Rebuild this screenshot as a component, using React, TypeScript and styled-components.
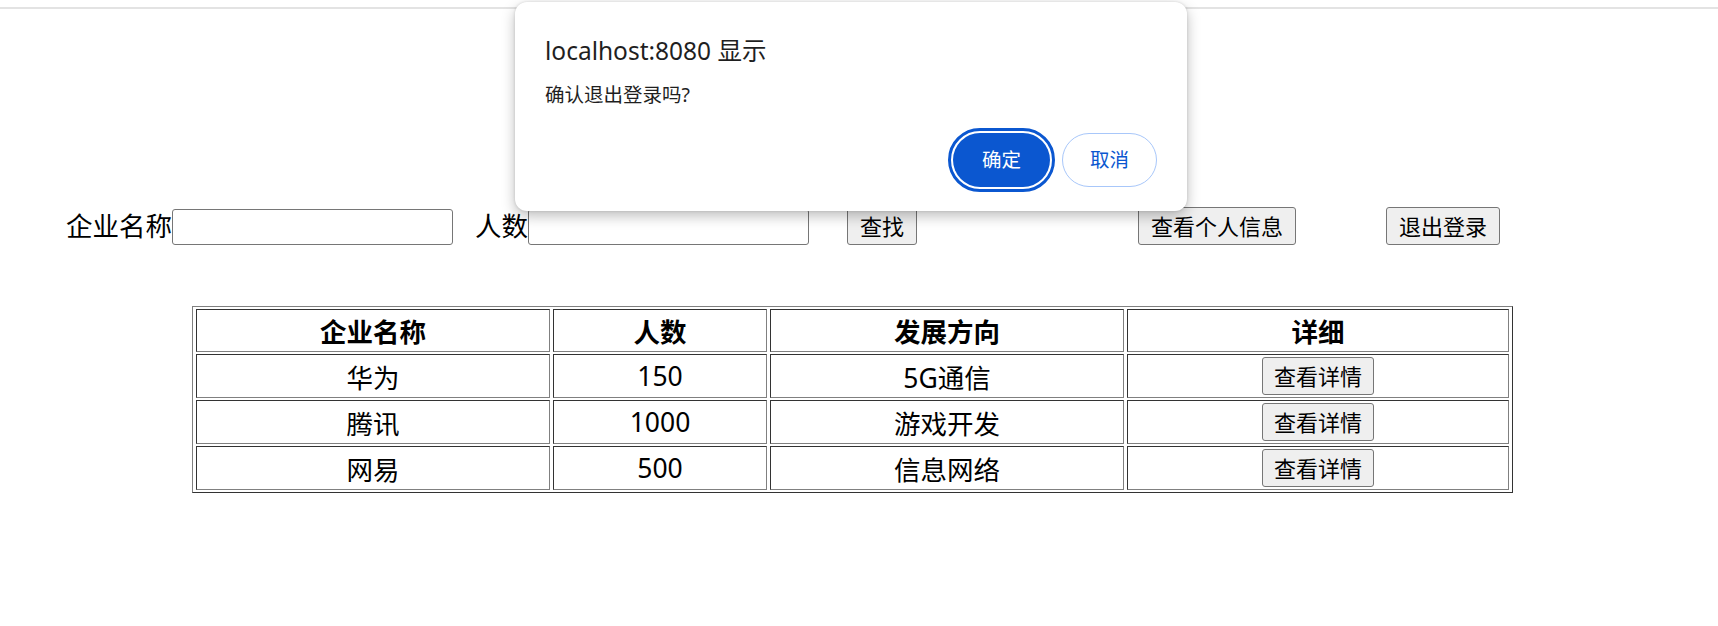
import React from 'react';
import styled, { createGlobalStyle } from 'styled-components';

const GlobalStyle = createGlobalStyle`
  html, body { margin: 0; padding: 0; background: #fff; }
  body {
    font-family: "Noto Sans", "Noto Sans CJK SC", sans-serif;
    color: #000;
  }
`;

const Page = styled.div`
  position: relative;
  width: 1718px;
  height: 626px;
  overflow: hidden;
`;

const TopRule = styled.div`
  margin-top: 7px;
  height: 2px;
  background: #e3e3e3;
`;

const SearchRow = styled.div`
  display: flex;
  align-items: flex-end;
  margin-top: 198px;
  padding-left: 66px;
  height: 38px;
`;

const Label = styled.span<{ $ml?: number }>`
  margin-left: ${(p) => p.$ml ?? 0}px;
  font-size: 26.5px;
  line-height: 38px;
  white-space: nowrap;
`;

const TextInput = styled.input`
  box-sizing: border-box;
  width: 281px;
  height: 36px;
  margin: 0;
  padding: 1px 3px;
  border: 1px solid #767676;
  border-radius: 3px;
  background: #fff;
  font-size: 20px;
`;

const PlainButton = styled.button<{ $ml?: number; $wide?: boolean }>`
  box-sizing: border-box;
  margin: 0 0 0 ${(p) => p.$ml ?? 0}px;
  height: 38px;
  padding: 0 ${(p) => (p.$wide ? 12 : 11)}px;
  border: 1px solid #767676;
  border-radius: 3px;
  background: #efefef;
  color: #000;
  font-family: "Noto Sans", "Noto Sans CJK SC", sans-serif;
  font-size: 22px;
  line-height: 1;
  white-space: nowrap;
`;

const DataTable = styled.table`
  margin: 61px 0 0 192px;
  border-collapse: separate;
  border-spacing: 3px 2.5px;
  table-layout: fixed;
  width: 1321px;
  border: 1px solid;
  border-color: #808080 #333 #333 #808080;
`;

const HeadCell = styled.th<{ $w: number }>`
  box-sizing: border-box;
  width: ${(p) => p.$w}px;
  height: 40px;
  padding: 1px;
  border: 1px solid;
  border-color: #333 #808080 #808080 #333;
  font-size: 26.5px;
  font-weight: 700;
  text-align: center;
  vertical-align: middle;
`;

const BodyCell = styled.td`
  box-sizing: border-box;
  height: 44px;
  padding: 1px;
  border: 1px solid;
  border-color: #333 #808080 #808080 #333;
  font-size: 26.5px;
  text-align: center;
  vertical-align: middle;
`;

const Dialog = styled.div`
  position: absolute;
  top: 2px;
  left: 515px;
  width: 672px;
  height: 209px;
  box-sizing: border-box;
  padding: 34px 30px 24px;
  background: #fff;
  border-radius: 12px;
  box-shadow: 0 5px 14px rgba(0, 0, 0, 0.26), 0 0 3px rgba(0, 0, 0, 0.14);
  display: flex;
  flex-direction: column;
`;

const DialogTitle = styled.div`
  font-size: 24.5px;
  line-height: 30px;
  color: #1f1f1f;
`;

const DialogMessage = styled.div`
  margin-top: 16px;
  font-size: 19.5px;
  line-height: 26px;
  color: #1f1f1f;
`;

const DialogActions = styled.div`
  margin-top: auto;
  display: flex;
  justify-content: flex-end;
  gap: 12px;
`;

const PillButton = styled.button<{ $primary?: boolean }>`
  box-sizing: border-box;
  width: ${(p) => (p.$primary ? 97 : 95)}px;
  height: 54px;
  margin: 0;
  padding: 0;
  border-radius: 27px;
  font-family: "Noto Sans", "Noto Sans CJK SC", sans-serif;
  font-size: 19.5px;
  line-height: 1;
  border: ${(p) => (p.$primary ? 'none' : '1px solid #a8c7fa')};
  background: ${(p) => (p.$primary ? '#0b57d0' : '#fff')};
  color: ${(p) => (p.$primary ? '#fff' : '#0b57d0')};
  outline: ${(p) => (p.$primary ? '3px solid #0b57d0' : 'none')};
  outline-offset: 2px;
`;

const rows = [
  { name: '华为', count: '150', dir: '5G通信' },
  { name: '腾讯', count: '1000', dir: '游戏开发' },
  { name: '网易', count: '500', dir: '信息网络' },
];

const widths = [354, 214, 354, 382];
const heads = ['企业名称', '人数', '发展方向', '详细'];

export default function App() {
  return (
    <Page>
      <GlobalStyle />
      <TopRule />
      <SearchRow>
        <Label>企业名称</Label>
        <TextInput type="text" />
        <Label $ml={22}>人数</Label>
        <TextInput type="text" />
        <PlainButton $ml={38} $wide>查找</PlainButton>
        <PlainButton $ml={221} $wide>查看个人信息</PlainButton>
        <PlainButton $ml={90} $wide>退出登录</PlainButton>
      </SearchRow>
      <DataTable>
        <thead>
          <tr>
            {heads.map((h, i) => (
              <HeadCell key={h} $w={widths[i]}>
                {h}
              </HeadCell>
            ))}
          </tr>
        </thead>
        <tbody>
          {rows.map((r) => (
            <tr key={r.name}>
              <BodyCell>{r.name}</BodyCell>
              <BodyCell>{r.count}</BodyCell>
              <BodyCell>{r.dir}</BodyCell>
              <BodyCell>
                <PlainButton>查看详情</PlainButton>
              </BodyCell>
            </tr>
          ))}
        </tbody>
      </DataTable>
      <Dialog role="dialog">
        <DialogTitle>localhost:8080 显示</DialogTitle>
        <DialogMessage>确认退出登录吗?</DialogMessage>
        <DialogActions>
          <PillButton $primary>确定</PillButton>
          <PillButton>取消</PillButton>
        </DialogActions>
      </Dialog>
    </Page>
  );
}
